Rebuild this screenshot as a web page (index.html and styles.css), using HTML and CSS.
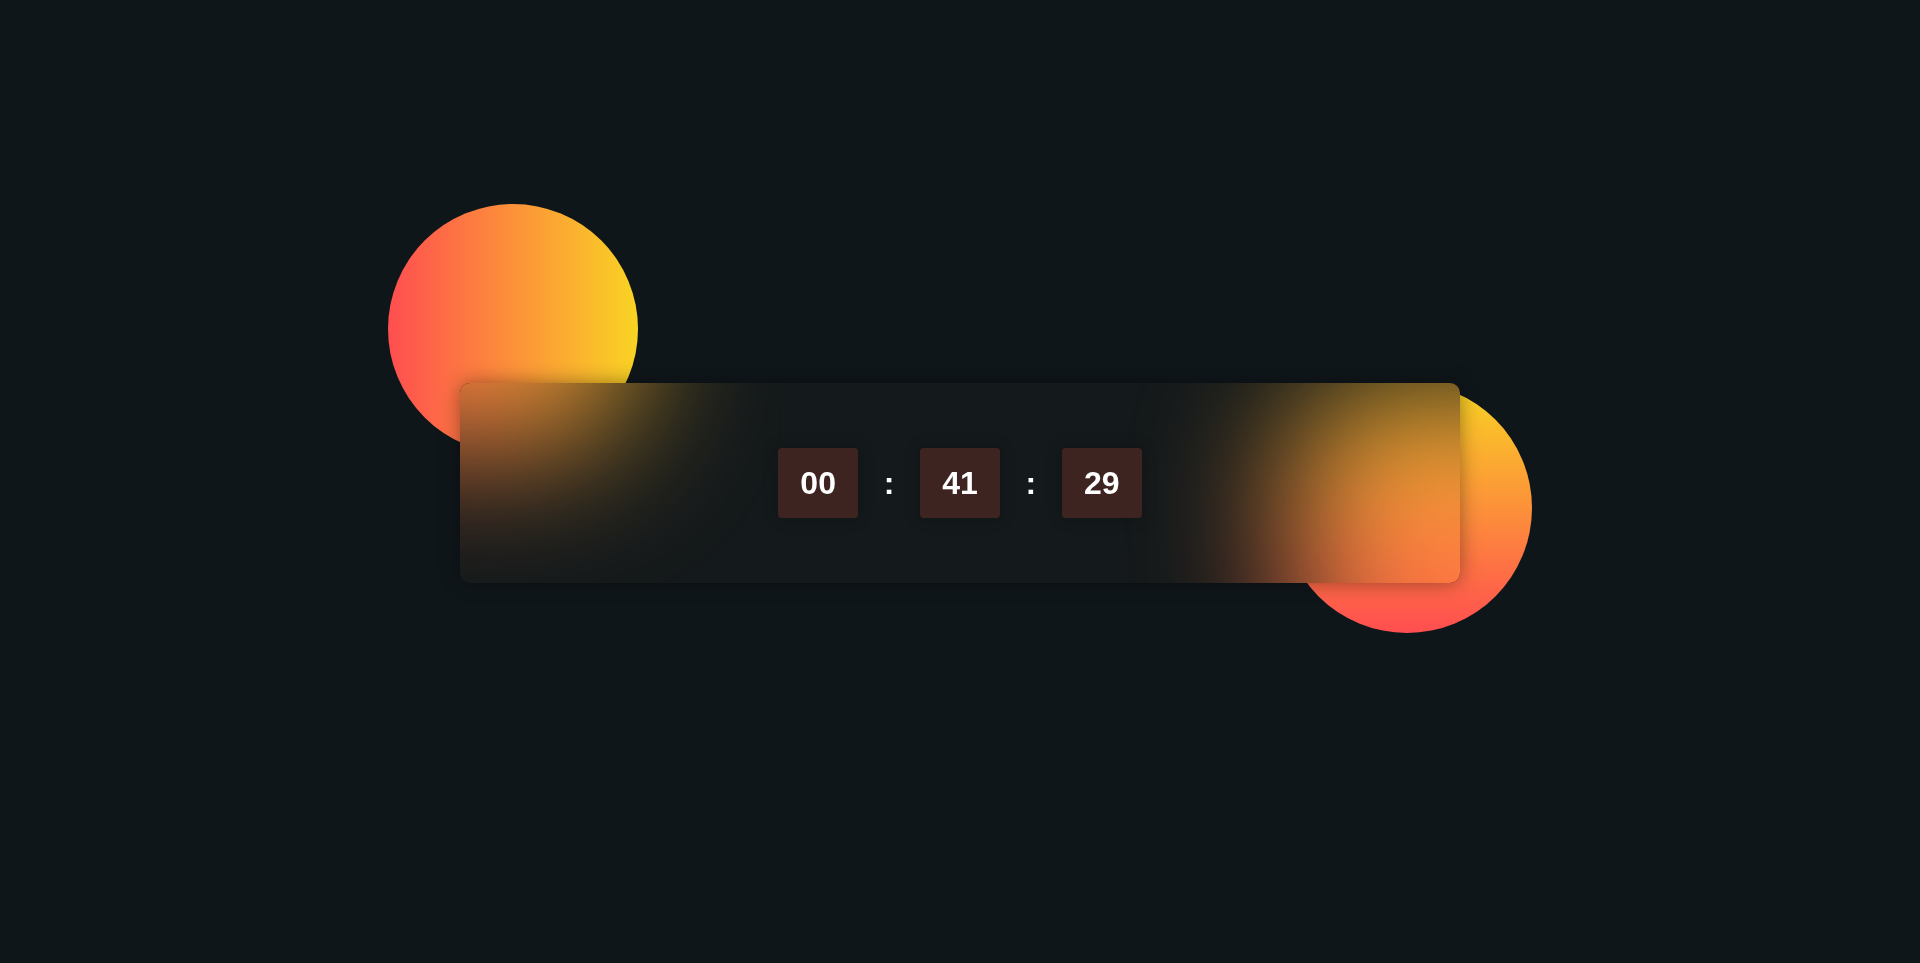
FILE: index.html
```html
<!DOCTYPE html>
<html lang="en">
<head>
<meta charset="utf-8">
<title>Countdown</title>
<link rel="stylesheet" href="styles.css">
</head>
<body>
  <div class="stage">
    <div class="circle circle-one"></div>
    <div class="circle circle-two"></div>
    <div class="card">
      <div class="glow glow-one">
        <div class="core"><div class="circle circle-one"></div></div>
        <div class="ext g1-top"></div>
        <div class="ext g1-left"></div>
        <div class="ext g1-corner"></div>
      </div>
      <div class="glow glow-two">
        <div class="core"><div class="circle circle-two"></div></div>
        <div class="ext g2-bottom"></div>
        <div class="ext g2-right"></div>
        <div class="ext g2-corner"></div>
      </div>
      <div class="timer">
        <span class="unit">00</span>
        <span class="sep">:</span>
        <span class="unit">41</span>
        <span class="sep">:</span>
        <span class="unit">29</span>
      </div>
    </div>
  </div>
</body>
</html>
```
FILE: styles.css
```css
* { box-sizing: border-box; }
html, body { height: 100%; }
body {
  margin: 0;
  background: #0f161a;
  font-family: "Liberation Sans", Arial, sans-serif;
  display: flex;
  align-items: center;
  justify-content: center;
}
.stage {
  position: relative;
  width: 1000px;
  height: 200px;
  margin-top: 3px;
}
.circle {
  position: absolute;
  width: 250px;
  height: 250px;
  border-radius: 50%;
}
.circle-one {
  left: -72px;
  top: -179px;
  background: linear-gradient(to right, #ff4e50, #f9d423);
}
.circle-two {
  left: 822px;
  top: 0;
  background: linear-gradient(to bottom, #f9d423, #ff4e50);
}
.card {
  position: relative;
  width: 100%;
  height: 100%;
  border-radius: 10px;
  overflow: hidden;
  background: #14191b;
  box-shadow: 0 0 20px rgba(0, 0, 0, 0.4);
  display: flex;
  align-items: center;
  justify-content: center;
}
.glow {
  position: absolute;
  inset: 0;
  filter: blur(70px);
}
.core {
  position: absolute;
  inset: 0;
  overflow: hidden;
}
.ext { position: absolute; }
.g1-top {
  left: 0;
  top: -400px;
  width: 166px;
  height: 400px;
  background: linear-gradient(to right, #ff4e50, #f9d423);
  background-size: 250px 100%;
  background-position: -72px 0;
}
.g1-left {
  left: -400px;
  top: 0;
  width: 400px;
  height: 59px;
  background: #fd7543;
}
.g1-corner {
  left: -400px;
  top: -400px;
  width: 400px;
  height: 400px;
  background: #fd7543;
}
.g2-bottom {
  left: 847px;
  top: 200px;
  width: 153px;
  height: 400px;
  background: #fe6947;
}
.g2-right {
  left: 1000px;
  top: 12px;
  width: 400px;
  height: 188px;
  background: linear-gradient(to bottom, #f9d423, #ff4e50);
  background-size: 100% 250px;
  background-position: 0 -12px;
}
.g2-corner {
  left: 1000px;
  top: 200px;
  width: 400px;
  height: 400px;
  background: #fe6947;
}
.timer {
  position: relative;
  display: flex;
  align-items: center;
  gap: 25.6px;
}
.unit {
  width: 80px;
  height: 70px;
  border-radius: 4px;
  background: #3d2420;
  color: #fff;
  font-size: 32px;
  font-weight: 700;
  display: flex;
  align-items: center;
  justify-content: center;
  box-shadow: 0 0 15px rgba(0, 0, 0, 0.25);
}
.sep {
  color: #fff;
  font-size: 32px;
  font-weight: 700;
  line-height: 1;
}
```
